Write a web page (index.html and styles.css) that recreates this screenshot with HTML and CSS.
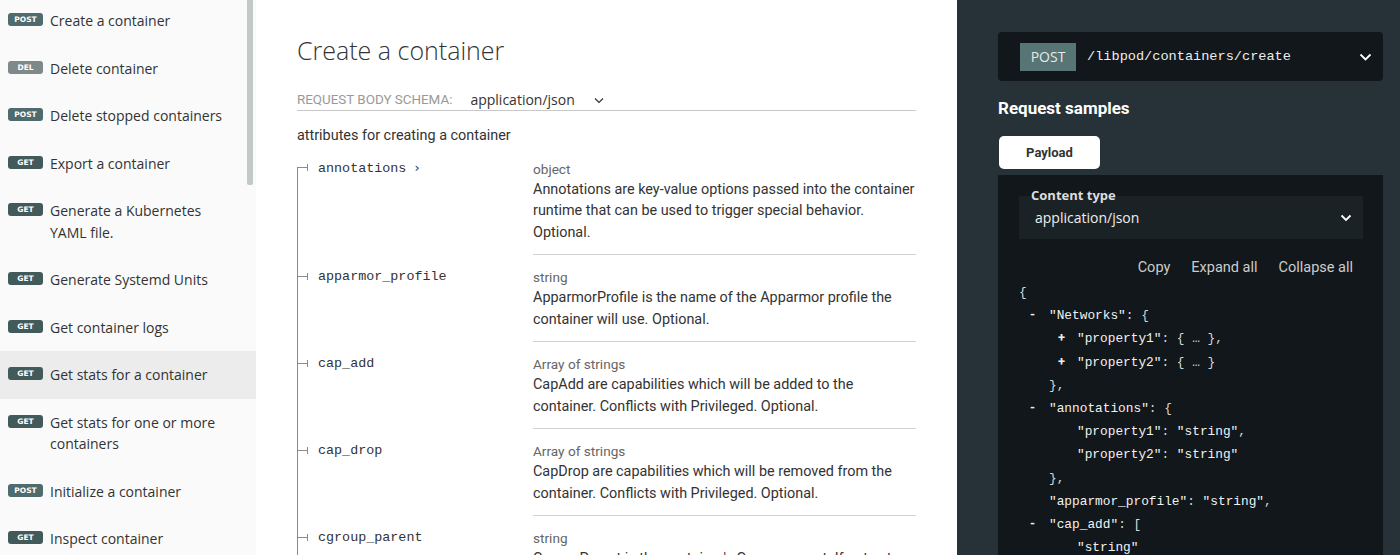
FILE: index.html
```html
<!DOCTYPE html>
<html lang="en">
<head>
<meta charset="utf-8">
<title>Create a container</title>
<link rel="stylesheet" href="styles.css">
</head>
<body>
<div class="page">
  <nav class="sidebar">
    <ul class="menu">
      <li class="item"><span class="badge post">post</span><span class="label">Create a container</span></li>
      <li class="item"><span class="badge del">del</span><span class="label">Delete container</span></li>
      <li class="item"><span class="badge post">post</span><span class="label">Delete stopped containers</span></li>
      <li class="item"><span class="badge get">get</span><span class="label">Export a container</span></li>
      <li class="item"><span class="badge get">get</span><span class="label">Generate a Kubernetes YAML file.</span></li>
      <li class="item"><span class="badge get">get</span><span class="label">Generate Systemd Units</span></li>
      <li class="item"><span class="badge get">get</span><span class="label">Get container logs</span></li>
      <li class="item active"><span class="badge get">get</span><span class="label">Get stats for a container</span></li>
      <li class="item"><span class="badge get">get</span><span class="label">Get stats for one or more containers</span></li>
      <li class="item"><span class="badge post">post</span><span class="label">Initialize a container</span></li>
      <li class="item"><span class="badge get">get</span><span class="label">Inspect container</span></li>
    </ul>
    <div class="scrollbar"></div>
  </nav>

  <main class="middle">
    <h1 class="title">Create a container</h1>
    <div class="schema">
      <span class="schema-label">Request Body schema:</span>
      <span class="schema-type">application/json</span>
      <svg class="schema-chev" width="10" height="7" viewBox="0 0 10 7"><path d="M1 1.5l4 4 4-4" fill="none" stroke="#333" stroke-width="1.2"/></svg>
    </div>
    <p class="schema-desc">attributes for creating a container</p>

    <div class="fields">
      <div class="field first">
        <div class="fname"><span class="fn">annotations</span><span class="caret">›</span></div>
        <div class="fdesc">
          <div class="ftype">object</div>
          <div class="ftext">Annotations are key-value options passed into the container runtime that can be used to trigger special behavior. Optional.</div>
        </div>
      </div>
      <div class="field">
        <div class="fname"><span class="fn">apparmor_profile</span></div>
        <div class="fdesc">
          <div class="ftype">string</div>
          <div class="ftext">ApparmorProfile is the name of the Apparmor profile the container will use. Optional.</div>
        </div>
      </div>
      <div class="field">
        <div class="fname"><span class="fn">cap_add</span></div>
        <div class="fdesc">
          <div class="ftype">Array of strings</div>
          <div class="ftext">CapAdd are capabilities which will be added to the container. Conflicts with Privileged. Optional.</div>
        </div>
      </div>
      <div class="field">
        <div class="fname"><span class="fn">cap_drop</span></div>
        <div class="fdesc">
          <div class="ftype">Array of strings</div>
          <div class="ftext">CapDrop are capabilities which will be removed from the container. Conflicts with Privileged. Optional.</div>
        </div>
      </div>
      <div class="field">
        <div class="fname"><span class="fn">cgroup_parent</span></div>
        <div class="fdesc">
          <div class="ftype">string</div>
          <div class="ftext">CgroupParent is the container's Cgroup parent. If not set, the default and configured Cgroup parent will be used. Optional.</div>
        </div>
      </div>
    </div>
  </main>

  <aside class="samples">
    <div class="endpoint">
      <span class="ep-method">POST</span>
      <span class="ep-path">/libpod/containers/create</span>
      <svg class="ep-chev" width="13" height="8" viewBox="0 0 13 8"><path d="M1.5 1.5l5 5 5-5" fill="none" stroke="#fff" stroke-width="1.8"/></svg>
    </div>
    <h3 class="samples-title">Request samples</h3>
    <div class="tabs"><span class="tab">Payload</span></div>
    <div class="codebox">
      <div class="ct-label">Content type</div>
      <div class="ct-select">
        <span>application/json</span>
        <svg width="12" height="8" viewBox="0 0 12 8"><path d="M1.5 1.5l4.5 4.5 4.5-4.5" fill="none" stroke="#fff" stroke-width="1.8"/></svg>
      </div>
      <div class="actions"><span>Copy</span><span>Expand all</span><span>Collapse all</span></div>
      <div class="json">
        <div class="jl">{</div>
        <div class="jl l1"><span class="tog">-</span><span class="s">"Networks"</span>: {</div>
        <div class="jl l2"><span class="tog">+</span><span class="s">"property1"</span>: { … },</div>
        <div class="jl l2"><span class="tog">+</span><span class="s">"property2"</span>: { … }</div>
        <div class="jl l1">},</div>
        <div class="jl l1"><span class="tog">-</span><span class="s">"annotations"</span>: {</div>
        <div class="jl l2"><span class="s">"property1"</span>: <span class="s">"string"</span>,</div>
        <div class="jl l2"><span class="s">"property2"</span>: <span class="s">"string"</span></div>
        <div class="jl l1">},</div>
        <div class="jl l1"><span class="s">"apparmor_profile"</span>: <span class="s">"string"</span>,</div>
        <div class="jl l1"><span class="tog">-</span><span class="s">"cap_add"</span>: [</div>
        <div class="jl l2"><span class="s">"string"</span></div>
        <div class="jl l1">],</div>
      </div>
    </div>
  </aside>
</div>
</body>
</html>
```

FILE: styles.css
```css
* { box-sizing: border-box; }
html, body { margin: 0; padding: 0; }
body {
  width: 1400px;
  height: 555px;
  overflow: hidden;
  background: #fff;
  color: #333;
  font-family: "Open Sans", "Liberation Sans", sans-serif;
}
.page {
  display: grid;
  grid-template-columns: 256px 701px 443px;
  height: 555px;
  overflow: hidden;
}

/* Sidebar */
.sidebar {
  position: relative;
  background: #fafafa;
  overflow: hidden;
}
.menu {
  list-style: none;
  margin: -3px 0 0;
  padding: 0;
}
.item {
  display: flex;
  align-items: flex-start;
  padding: 13px 23px 13px 8px;
  font-size: 14px;
  line-height: 21.5px;
  color: #333;
}
.item.active { background: #ececec; }
.badge {
  flex: 0 0 35px;
  height: 13px;
  margin-top: 3px;
  margin-right: 7px;
  border-radius: 3px;
  font-family: "DejaVu Sans", Verdana, sans-serif;
  font-size: 7.5px;
  font-weight: bold;
  line-height: 13px;
  text-align: center;
  text-transform: uppercase;
  color: #fff;
}
.badge.post { background: #4f6b6d; }
.badge.get { background: #435a5b; }
.badge.del { background: #7f898a; }
.label { flex: 0 1 auto; }
.scrollbar {
  position: absolute;
  left: 247px;
  top: 0;
  width: 6px;
  height: 185px;
  background: #c2c9c9;
  border-radius: 0 0 2px 2px;
}

/* Middle */
.middle {
  padding: 35px 41px 0;
  background: #fff;
  overflow: hidden;
}
.title {
  margin: 0;
  font-size: 25px;
  line-height: 30px;
  font-weight: 300;
  color: #333;
}
.schema {
  display: flex;
  align-items: center;
  margin-top: 25px;
  height: 21px;
  line-height: 20px;
  border-bottom: 1px solid #c8c8c8;
}
.schema-label {
  font-family: Roboto, "Liberation Sans", sans-serif;
  font-size: 13.4px;
  text-transform: uppercase;
  color: #999;
  margin-right: 18px;
}
.schema-type { font-size: 14px; color: #333; margin-right: 19px; }
.schema-chev { display: block; }
.schema-desc {
  margin: 14px 0 0;
  font-family: Roboto, "Liberation Sans", sans-serif;
  font-size: 14.4px;
  line-height: 21.5px;
}

.fields { display: flex; flex-direction: column; }
.field {
  display: grid;
  grid-template-columns: 236px 1fr;
}
.fname {
  padding-top: 12px;
  line-height: 20px;
  background: linear-gradient(#8a8a8a, #8a8a8a) no-repeat 0 0 / 1px 100%;
  font-family: "Liberation Mono", "Courier New", monospace;
  font-size: 13.4px;
  color: #333;
  white-space: nowrap;
}
.field.first .fname {
  padding-top: 11px;
  background: linear-gradient(#8a8a8a, #8a8a8a) no-repeat 0 21px / 1px 100%;
}
.fname::before {
  content: "";
  display: inline-block;
  vertical-align: middle;
  width: 10px;
  height: 1px;
  background: #8a8a8a;
}
.fn {
  position: relative;
  padding-left: 11px;
}
.fn::before {
  content: "";
  position: absolute;
  left: 0;
  top: 50%;
  margin-top: -4px;
  width: 1px;
  height: 7px;
  background: #8a8a8a;
}
.caret {
  margin-left: 8px;
  font-family: "DejaVu Sans", sans-serif;
  font-size: 13px;
}
.fdesc {
  padding: 12px 0 11px;
  border-bottom: 1px solid #d2d2d2;
  font-family: Roboto, "Liberation Sans", sans-serif;
}
.ftype {
  font-size: 13.6px;
  line-height: 20px;
  color: #666;
}
.ftext {
  font-size: 14.4px;
  line-height: 21.5px;
  color: #333;
}

/* Right panel */
.samples {
  background: #263238;
  padding: 32px 17px 0 41px;
  color: #fff;
  overflow: hidden;
}
.endpoint {
  display: flex;
  align-items: center;
  height: 49px;
  padding: 0 11px 0 22px;
  background: #11171a;
  border-radius: 4px;
}
.ep-method {
  width: 56px;
  height: 28px;
  line-height: 28px;
  text-align: center;
  background: #577575;
  color: #e8e8e8;
  font-size: 14px;
}
.ep-path {
  flex: 1;
  margin-left: 11px;
  font-family: "Liberation Mono", "Courier New", monospace;
  font-size: 13.6px;
  color: #eee;
}
.ep-chev { display: block; }
.samples-title {
  margin: 16px 0 0;
  font-family: Roboto, "Liberation Sans", sans-serif;
  font-size: 17px;
  line-height: 22px;
  font-weight: 700;
  color: #fff;
}
.tabs { display: flex; margin-top: 17px; padding-left: 1px; }
.tab {
  width: 101px;
  height: 33px;
  line-height: 33px;
  text-align: center;
  background: #fff;
  border-radius: 5px;
  color: #333;
  font-family: Roboto, "Liberation Sans", sans-serif;
  font-size: 13px;
  font-weight: 700;
}
.codebox {
  margin-top: 6px;
  height: 400px;
  background: #11171a;
  padding: 13px 20px 0 21px;
}
.ct-label {
  position: relative;
  z-index: 1;
  margin: 0 0 -6px 12px;
  font-size: 13px;
  line-height: 14px;
  font-weight: 700;
  color: #ddd;
}
.ct-select {
  display: flex;
  align-items: center;
  justify-content: space-between;
  height: 43px;
  padding: 0 11px 0 16px;
  background: #1b2225;
  font-size: 14px;
  color: #eee;
}
.actions {
  display: flex;
  justify-content: flex-end;
  gap: 21px;
  margin-top: 19px;
  padding-right: 10px;
  font-family: Roboto, "Liberation Sans", sans-serif;
  font-size: 14.5px;
  line-height: 20px;
  color: #ccc;
}
.json {
  margin-top: 3px;
  font-family: "Liberation Mono", "Courier New", monospace;
  font-size: 12.8px;
  line-height: 23.2px;
  color: #d8d8d8;
}
.jl { white-space: pre; height: 23.2px; }
.jl.l1 { padding-left: 30px; }
.jl.l2 { padding-left: 58px; }
.tog {
  display: inline-block;
  width: 19px;
  margin-left: -19px;
  line-height: 1;
  font-family: Roboto, "Liberation Sans", sans-serif;
  font-weight: 700;
  color: #eee;
}
.s { color: #f2f2f2; }
```
